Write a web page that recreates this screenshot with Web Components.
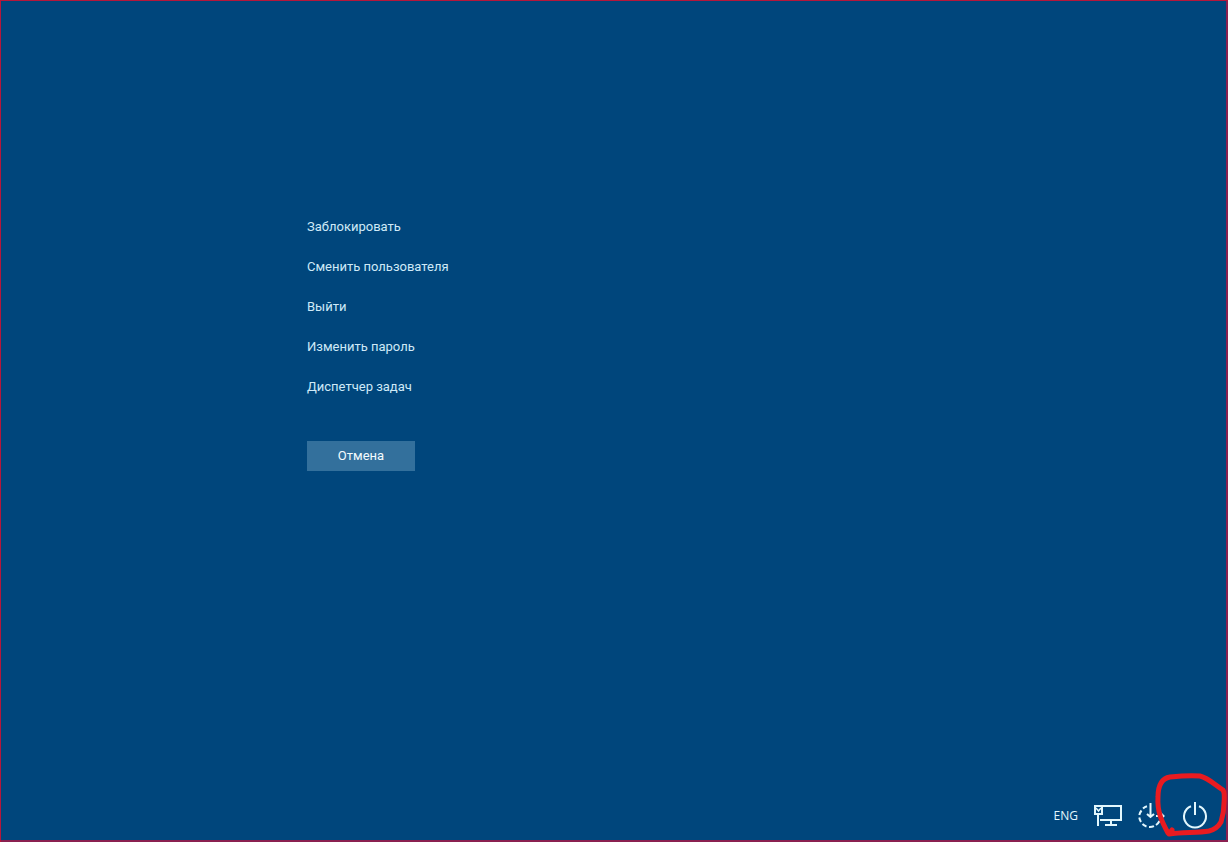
<!DOCTYPE html>
<html lang="ru">
<head>
<meta charset="utf-8">
<meta name="viewport" content="width=device-width, initial-scale=1">
<title>Параметры безопасности</title>
<style>
html, body { margin: 0; min-height: 100vh; background: #00467c; }
body { font-family: "Open Sans", "Noto Sans", sans-serif; }
</style>
</head>
<body>
<security-screen>
  <menu-action>Заблокировать</menu-action>
  <menu-action>Сменить пользователя</menu-action>
  <menu-action>Выйти</menu-action>
  <menu-action>Изменить пароль</menu-action>
  <menu-action>Диспетчер задач</menu-action>
  <cancel-button slot="cancel">Отмена</cancel-button>
  <system-tray slot="tray"></system-tray>
</security-screen>
<script>
class BaseElement extends HTMLElement {
  constructor() {
    super();
    this.attachShadow({ mode: "open" }).innerHTML = this.constructor.markup;
  }
}

customElements.define("menu-action", class extends BaseElement {
  static markup = `
    <style>
      :host { display: block; }
      button { display: block; margin: 0; padding: 10px 0; border: 0; background: none;
        color: #cfeaf8; font-family: Roboto, "Open Sans", sans-serif; font-size: 13px; line-height: 20px; cursor: pointer; text-align: left; }
    </style>
    <button type="button"><slot></slot></button>`;
});

customElements.define("cancel-button", class extends BaseElement {
  static markup = `
    <style>
      :host { display: block; }
      button { display: block; width: 108px; margin: 0; padding: 5px 0; border: 0; background: #33709c;
        color: #f4fcff; font-family: Roboto, "Open Sans", sans-serif; font-size: 13px; line-height: 20px; cursor: pointer; }
    </style>
    <button type="button"><slot></slot></button>`;
});

customElements.define("system-tray", class extends BaseElement {
  static markup = `
    <style>
      :host { display: flex; justify-content: flex-end; align-items: center; gap: 15px; position: relative;
        padding: 0 19px 12px 0; color: #e2f7fd; }
      button { display: block; margin: 0; padding: 0; border: 0; background: none; color: inherit;
        font: inherit; font-size: 12px; line-height: 28px; cursor: pointer; }
      svg { display: block; fill: none; stroke: currentColor; stroke-width: 2; }
      .mark { position: absolute; right: 0; bottom: 0; stroke: #e91b20; stroke-width: 5;
        stroke-linecap: round; stroke-linejoin: round; pointer-events: none; }
    </style>
    <button type="button">ENG</button>
    <button type="button" aria-label="Сеть">
      <svg width="30" height="28" viewBox="0 0 30 28">
        <path d="M10 4H28V18H7M2 4H9V12H2ZM5 12V24M18 18V23M12 23H24"/>
        <path d="M3 6L5.500 9L8 6" stroke-width="1.500"/>
      </svg>
    </button>
    <button type="button" aria-label="Обновление">
      <svg width="28" height="28" viewBox="2 0 28 28">
        <path d="M11 4.200A11 11 0 0 0 7 6.500M5.500 8.500A11 11 0 0 0 3.300 13M3.300 15.500A11 11 0 0 0 5 20M6.500 22A11 11 0 0 0 10.500 24.500M13 25A11 11 0 0 0 18 24.200M20 23A11 11 0 0 0 23.500 19"/>
        <path d="M14.500 1V14M11 12L14.500 15L18 12M20 14H27M24.500 11L27.500 14L24.500 17"/>
      </svg>
    </button>
    <button type="button" aria-label="Выключение">
      <svg width="28" height="28" viewBox="0 0 28 28">
        <path d="M10 4.200A11 11 0 1 0 18 4.200M14 0V13"/>
      </svg>
    </button>
    <svg class="mark" width="78" height="77" viewBox="0 0 78 77" aria-hidden="true">
      <path d="M18 68C12 57 7 47 8 32Q8 14 20 12Q39 10 50 11C58 13 64 19 73 25Q75 28 74 38Q74 48 71 57Q67 64 59 66C48 68 34 67 19 69L22 65"/>
    </svg>`;
});

customElements.define("security-screen", class extends BaseElement {
  static markup = `
    <style>
      :host { display: flex; flex-direction: column; box-sizing: border-box; min-height: 100vh;
        box-shadow: inset 1px 1px 0 #b5173b, inset -2px -2px 0 #8a2050; }
      main { flex: 1; padding: 207px 0 40px 25%; }
      nav { display: flex; flex-direction: column; align-items: flex-start; margin-bottom: 34px; }
    </style>
    <main><nav><slot></slot></nav><slot name="cancel"></slot></main>
    <footer><slot name="tray"></slot></footer>`;
});
</script>
</body>
</html>
